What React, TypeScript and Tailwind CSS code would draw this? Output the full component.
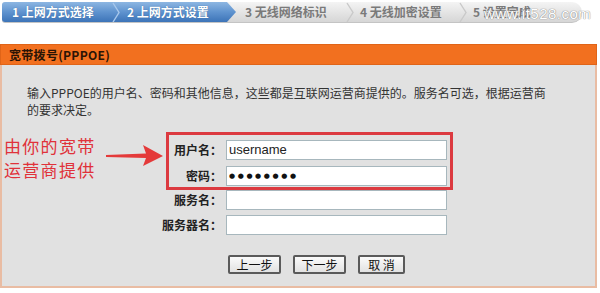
import React from "react";

const cjk = "font-['Noto_Sans_CJK_SC','Noto_Sans',sans-serif]";

const Sep = ({ color }: { color: string }) => (
  <svg width="10" height="21" viewBox="0 0 10 21" className="shrink-0">
    <path d="M2 1 L8 10.5 L2 20" fill="none" stroke={color} strokeWidth="1.4" />
  </svg>
);

const Row = ({
  label,
  labelW,
  children,
}: {
  label: string;
  labelW: string;
  children: React.ReactNode;
}) => (
  <div className="flex items-center h-[20px]">
    <div className={`${labelW} text-right text-[12px] font-bold text-[#222] whitespace-nowrap`}>
      {label}
    </div>
    <div className="ml-[4px]">{children}</div>
  </div>
);

const Field = ({ value, dots }: { value?: string; dots?: boolean }) => (
  <div className="w-[221px] h-[20px] bg-white border border-[#a7b7bd] flex items-center pl-[2px]">
    {dots ? (
      <span className="text-[7px] tracking-[2.6px] text-[#111] font-['DejaVu_Sans',sans-serif]">●●●●●●●●</span>
    ) : (
      <span className="text-[13px] text-[#222] font-['Liberation_Sans',Arial,sans-serif]">{value}</span>
    )}
  </div>
);

const Btn = ({ children, w }: { children: React.ReactNode; w: string }) => (
  <button
    className={`${w} h-[19px] border-2 border-[#5a5a5a] rounded-[2px] bg-gradient-to-b from-[#fafafa] to-[#e2e2e2] text-[12px] text-[#111] leading-none flex items-center justify-center`}
  >
    {children}
  </button>
);

export default function App() {
  return (
    <div className={`w-[600px] h-[293px] bg-white overflow-hidden ${cjk}`}>
      {/* step bar */}
      <div className="relative flex h-[21px] mt-[2px] ml-[2px] w-[580px] rounded-r-[10px] rounded-l-[3px] bg-gradient-to-b from-[#f4f4f4] to-[#d6d6d6] border-b border-[#c4c4c4] text-[12px] font-bold">
        <div className="flex items-center w-[234px] h-full pl-[10px] rounded-l-[3px] bg-gradient-to-b from-[#8db6e2] via-[#5f93cf] to-[#3c74b8] text-white [clip-path:polygon(0_0,calc(100%-9px)_0,100%_50%,calc(100%-9px)_100%,0_100%)] [text-shadow:0_0_1px_#2c5a90]">
          <span className="w-[99px]">1 上网方式选择</span>
          <Sep color="#a8c8ec" />
          <span className="ml-[6px]">2 上网方式设置</span>
        </div>
        <div className="flex items-center h-full text-[#7a7a7a] pl-[9px]">
          <span className="w-[100px]">3 无线网络标识</span>
          <Sep color="#c9c9c9" />
          <span className="ml-[5px] w-[98px]">4 无线加密设置</span>
          <Sep color="#c9c9c9" />
          <span className="ml-[5px]">5 设置完成</span>
        </div>
        <span className="absolute left-[482px] top-[1px] text-[15px] font-normal text-white tracking-[0.5px] font-['Liberation_Sans',sans-serif] [text-shadow:0_0_1px_#888,0_0_1px_#888]">
          www.it528.com
        </span>
      </div>

      {/* panel */}
      <div className="mt-[21px] w-[597px]">
        <div className="h-[21px] bg-[#f2701f] border border-[#e06418] flex items-center pl-[8px] text-[12px] font-bold text-[#2a1405] tracking-[0.3px]">
          宽带拨号(PPPOE)
        </div>
        <div className="h-[223px] bg-[#e1e1e1] border-x-2 border-b-2 border-[#e9bca3]">
          <p className="pt-[19px] pl-[25px] pr-[40px] text-[12px] leading-[17px] text-[#333]">
            输入PPPOE的用户名、密码和其他信息，这些都是互联网运营商提供的。服务名可选，根据运营商的要求决定。
          </p>

          <div className="flex mt-[14px]">
            <div className="w-[104px] pl-[2px] pt-[2px] text-[17px] leading-[24px] tracking-[1.3px] text-[#e0323a] font-normal">
              <div>由你的宽带</div>
              <div>运营商提供</div>
            </div>
            <svg width="60" height="30" viewBox="0 0 60 30" className="mt-[9px] shrink-0">
              <path d="M0 14 L40 12.5 L37 4 L57 15 L37 25 L40 17 L0 16 Z" fill="#e43a3a" />
            </svg>
            <div className="flex flex-col">
              <div className="w-[287px] h-[58px] border-[3px] border-[#dc3a40] flex flex-col gap-[6px] pt-[5px]">
                <Row label="用户名：" labelW="w-[53px]">
                  <Field value="username" />
                </Row>
                <Row label="密码：" labelW="w-[53px]">
                  <Field dots />
                </Row>
              </div>
              <div className="flex flex-col gap-[5px] mt-[0px] -ml-[8px]">
                <Row label="服务名：" labelW="w-[64px]">
                  <Field />
                </Row>
                <Row label="服务器名：" labelW="w-[64px]">
                  <Field />
                </Row>
              </div>
            </div>
          </div>

          <div className="flex gap-[12px] ml-[226px] mt-[20px]">
            <Btn w="w-[53px]">上一步</Btn>
            <Btn w="w-[53px]">下一步</Btn>
            <Btn w="w-[47px]">取 消</Btn>
          </div>
        </div>
      </div>
    </div>
  );
}
